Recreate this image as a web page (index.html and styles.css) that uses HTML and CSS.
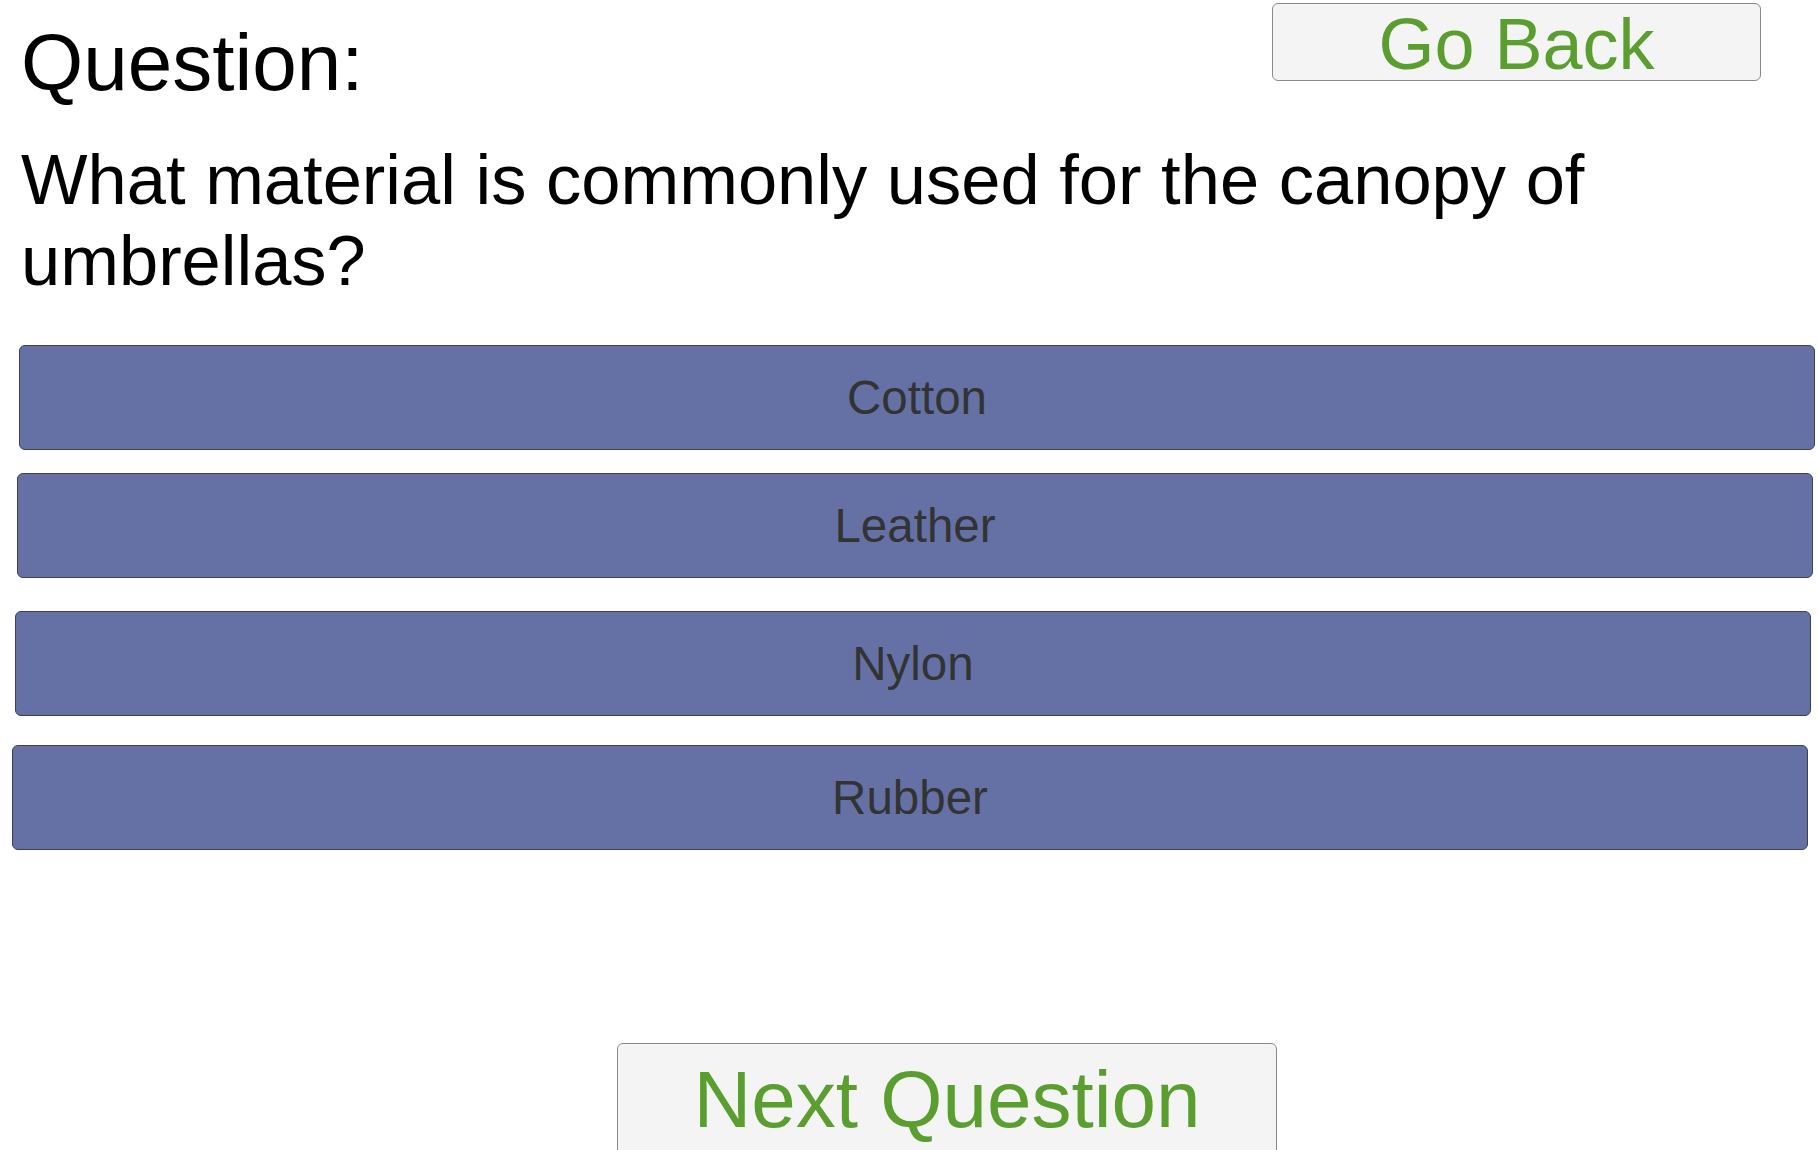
FILE: index.html
```html
<!DOCTYPE html>
<html lang="en">
<head>
<meta charset="utf-8">
<title>Quiz</title>
<link rel="stylesheet" href="styles.css">
</head>
<body>
<div class="page">
  <header class="header">
    <h1 class="label">Question:</h1>
    <button class="back-btn">Go Back</button>
  </header>
  <p class="question">What material is commonly used for the canopy of umbrellas?</p>
  <div class="options">
    <button class="option opt-1">Cotton</button>
    <button class="option opt-2">Leather</button>
    <button class="option opt-3">Nylon</button>
    <button class="option opt-4">Rubber</button>
  </div>
  <div class="footer">
    <button class="next-btn">Next Question</button>
  </div>
</div>
</body>
</html>
```

FILE: styles.css
```css
html, body {
  margin: 0;
  padding: 0;
  background: #ffffff;
  overflow: hidden;
}

body {
  font-family: "Liberation Sans", Arial, sans-serif;
  color: #000000;
}

.page {
  width: 1818px;
  height: 1150px;
  display: flex;
  flex-direction: column;
}

.header {
  display: flex;
  align-items: flex-start;
}

.label {
  margin: 17px 0 0 21px;
  font-size: 80px;
  font-weight: normal;
  line-height: normal;
}

.back-btn {
  margin: 3px 57px 0 auto;
  width: 489px;
  height: 78px;
  box-sizing: border-box;
  padding: 0;
  background: #f4f4f4;
  border: 1px solid #8a8a8a;
  border-radius: 6px;
  color: #5b9e30;
  font-family: "Liberation Sans", Arial, sans-serif;
  font-size: 72px;
  line-height: 80px;
  display: flex;
  align-items: flex-start;
  justify-content: center;
  overflow: visible;
}

.question {
  margin: 30px 0 0 21px;
  font-size: 70.5px;
  line-height: normal;
  max-width: 1700px;
}

.options {
  margin-top: 44px;
  display: flex;
  flex-direction: column;
}

.option {
  width: 1796px;
  height: 105px;
  box-sizing: border-box;
  background: #6571a5;
  border: 1px solid #3c4058;
  border-radius: 6px;
  color: #333333;
  font-family: "Liberation Sans", Arial, sans-serif;
  font-size: 47.5px;
  line-height: normal;
  padding: 0;
  display: flex;
  align-items: center;
  justify-content: center;
}

.opt-1 { margin-left: 19px; }
.opt-2 { margin-left: 17px; margin-top: 23px; }
.opt-3 { margin-left: 15px; margin-top: 33px; }
.opt-4 { margin-left: 12px; margin-top: 29px; }

.footer {
  margin-top: 193px;
  display: flex;
}

.next-btn {
  margin-left: 617px;
  width: 660px;
  height: 130px;
  box-sizing: border-box;
  background: #f4f4f4;
  border: 1px solid #8a8a8a;
  border-radius: 6px;
  color: #5b9e30;
  font-family: "Liberation Sans", Arial, sans-serif;
  font-size: 80px;
  line-height: normal;
  padding: 10px 0 0 0;
  display: flex;
  align-items: flex-start;
  justify-content: center;
}
```
